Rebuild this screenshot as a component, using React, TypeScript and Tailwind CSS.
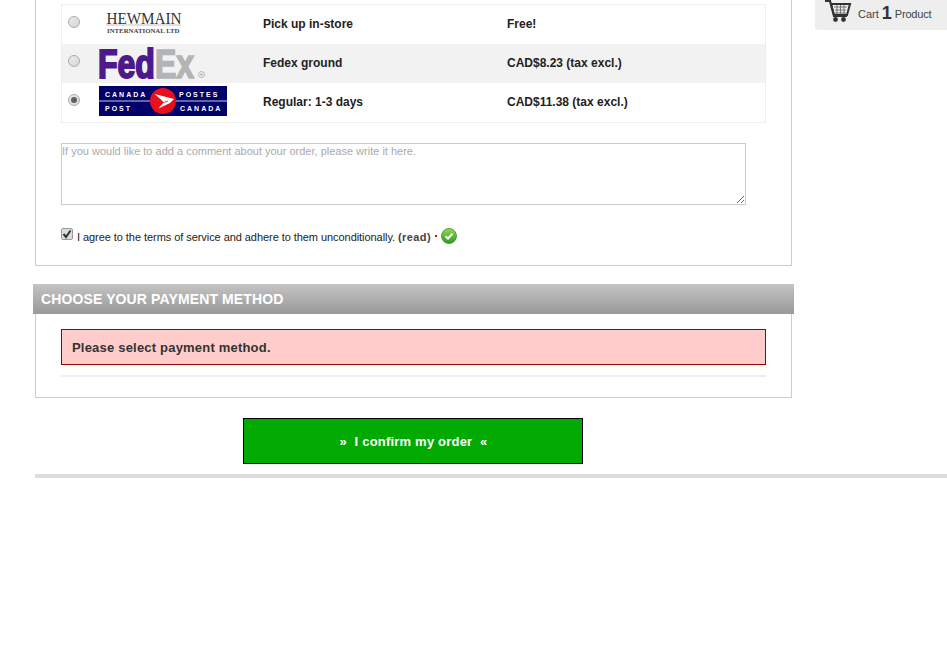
import React from "react";

function Radio({ checked = false }: { checked?: boolean }) {
  return (
    <span className="flex h-[12px] w-[12px] shrink-0 items-center justify-center rounded-full border border-[#acacac] bg-gradient-to-br from-[#ebebeb] to-[#d6d6d6]">
      {checked && <span className="h-[6px] w-[6px] rounded-full bg-[#606060]" />}
    </span>
  );
}

function Hewmain() {
  return (
    <svg width="80" height="24" viewBox="0 0 80 24" className="block overflow-visible">
      <g transform="translate(0.5,10.5) scale(0.95,1)">
        <text x="0" y="0" fontFamily="'Liberation Serif', serif" fontSize="16" fill="#333">HEWMAIN</text>
      </g>
      <rect x="0" y="11.5" width="75" height="1" fill="#c4c4c4" />
      <g transform="translate(1,19.5) scale(1.05,1)">
        <text x="0" y="0" fontFamily="'Liberation Serif', serif" fontSize="6.5" fontWeight="bold" fill="#444">INTERNATIONAL LTD</text>
      </g>
    </svg>
  );
}

function Fedex() {
  const font = "'Liberation Sans', sans-serif";
  return (
    <svg width="108" height="32" viewBox="0 0 108 32" className="block overflow-visible">
      <g transform="translate(-1,29.5) scale(0.8,1)">
        <text x="0" y="0" fontFamily={font} fontSize="40" fontWeight="bold" fill="#4d1a8c" stroke="#4d1a8c" strokeWidth="2">Fed</text>
      </g>
      <g transform="translate(56,29.5) scale(0.8,1)">
        <text x="0" y="0" fontFamily={font} fontSize="40" fontWeight="bold" fill="#b4b4b4" stroke="#b4b4b4" strokeWidth="1.6">Ex</text>
      </g>
      <circle cx="102.5" cy="26.5" r="3" fill="none" stroke="#b4b4b4" strokeWidth="1" />
      <circle cx="102.5" cy="26.5" r="1.2" fill="#b4b4b4" />
    </svg>
  );
}

function CanadaPost() {
  return (
    <svg width="128" height="30" viewBox="0 0 128 30" className="block">
      <rect width="128" height="30" fill="#00006a" />
      <rect y="14.5" width="128" height="1" fill="#c8c8e0" />
      <g fontFamily="'Liberation Sans', sans-serif" fontSize="7" fontWeight="bold" fill="#fff" letterSpacing="2">
        <text x="6" y="11">CANADA</text>
        <text x="80" y="11">POSTES</text>
        <text x="6" y="25">POST</text>
        <text x="81" y="25">CANADA</text>
      </g>
      <circle cx="64" cy="15" r="13" fill="#e8101c" />
      <path d="M55.5 8 L75 13 L71 17 L59.5 22.5 L64.5 16.5 L62 13.5 Z" fill="#fff" />
      <path d="M60 18 L69 15" stroke="#e8101c" strokeWidth="0.8" />
    </svg>
  );
}

function CartIcon() {
  return (
    <svg width="27" height="24" viewBox="0 0 27 24" className="block">
      <path d="M0 1 H5 L9 16 H22" fill="none" stroke="#333" strokeWidth="2.2" />
      <path d="M6 4 H25 L22 15 H9 Z" fill="none" stroke="#333" strokeWidth="2" />
      <path d="M9 7 H22 M10 10 H21 M10 13 H21 M12 5 V14 M15.5 5 V14 M19 5 V14" stroke="#777" strokeWidth="1" />
      <circle cx="10.5" cy="19.5" r="2.4" fill="#333" />
      <circle cx="18.5" cy="19.5" r="2.4" fill="#333" />
    </svg>
  );
}

function CheckBadge() {
  return (
    <svg width="16" height="16" viewBox="0 0 16 16" className="block">
      <defs>
        <linearGradient id="g" x1="0" y1="0" x2="0" y2="1">
          <stop offset="0" stopColor="#8fdc4a" />
          <stop offset="1" stopColor="#2f9a1c" />
        </linearGradient>
      </defs>
      <circle cx="8" cy="8" r="7.5" fill="url(#g)" stroke="#3c8a28" strokeWidth="0.8" />
      <path d="M4.5 8.2 L7 10.5 L11.5 5.8" fill="none" stroke="#fff" strokeWidth="2" />
    </svg>
  );
}

const rows = [
  { logo: <Hewmain />, name: "Pick up in-store", price: "Free!", bg: "bg-white", checked: false, pad: "pl-[7px]" },
  { logo: <Fedex />, name: "Fedex ground", price: "CAD$8.23 (tax excl.)", bg: "bg-[#f2f2f2]", checked: false, pad: "" },
  { logo: <CanadaPost />, name: "Regular: 1-3 days", price: "CAD$11.38 (tax excl.)", bg: "bg-white", checked: true, pad: "mb-[4px]" },
];

export default function App() {
  return (
    <div className="relative flex min-h-[656px] items-start bg-white font-['Liberation_Sans',Arial,sans-serif] text-[12px] text-[#222222]">
      <div className="ml-[33px] w-[761px] shrink-0">
        <section className="mx-[2px] border-x border-b border-[#cccccc] px-[25px] pb-[20px] pt-[4px]">
          <div className="w-[705px] border border-[#eeeeee]">
            {rows.map((r) => (
              <div key={r.name} className={`flex h-[39px] items-center ${r.bg}`}>
                <span className="ml-[6px] -mt-[5px]">
                  <Radio checked={r.checked} />
                </span>
                <div className={`ml-[19px] w-[164px] ${r.pad}`}>{r.logo}</div>
                <div className="mb-[2px] w-[244px] font-bold">{r.name}</div>
                <div className="mb-[2px] font-bold">{r.price}</div>
              </div>
            ))}
          </div>
          <textarea
            readOnly
            placeholder="If you would like to add a comment about your order, please write it here."
            className="mt-[20px] block h-[62px] w-[685px] border border-[#cccccc] pt-[1px] font-['Liberation_Sans',Arial,sans-serif] text-[11px] leading-[13px] placeholder:text-[#aaaaaa]"
          />
          <div className="mt-[22px] flex h-[18px] items-center">
            <span className="-mt-[4px] flex h-[12px] w-[12px] shrink-0 items-center justify-center rounded-[2px] border border-[#999999] bg-[#dcdcdc]">
              <svg width="10" height="10" viewBox="0 0 10 10">
                <path d="M1.5 5 L4 8 L8.5 1.5" fill="none" stroke="#333" strokeWidth="2" />
              </svg>
            </span>
            <span className="ml-[4px] mt-[2px] text-[11px] tracking-[-0.06px]">I agree to the terms of service and adhere to them unconditionally.</span>
            <span className="ml-[3px] mt-[2px] text-[11px] font-bold tracking-[0.4px] text-[#444444]">(read)</span>
            <span className="ml-[4px] -mt-[1px] h-[2px] w-[2px] bg-[#ee0000]" />
            <span className="ml-[4px]">
              <CheckBadge />
            </span>
          </div>
        </section>

        <h2 className="mt-[18px] flex h-[30px] items-center bg-gradient-to-b from-[#c4c4c4] to-[#999999] pl-[8px] text-[14px] font-bold uppercase tracking-[0.12px] text-white">
          Choose your payment method
        </h2>

        <section className="mx-[2px] border-x border-b border-[#cccccc] px-[25px] pb-[20px] pt-[15px]">
          <div className="flex h-[36px] w-[705px] items-center border border-[#990000] bg-[#ffcccc] pl-[10px] pt-[2px] text-[13px] font-bold tracking-[0.2px] text-[#333333]">
            Please select payment method.
          </div>
          <div className="mt-[10px] h-[2px] w-[705px] bg-[#eeeeee]" />
        </section>

        <div className="ml-[210px] mt-[20px] flex h-[46px] w-[340px] items-center justify-center border border-black bg-[#00aa00] pl-[1px] pt-[2px] text-[13px] font-bold tracking-[0.2px] text-white">
          <span className="whitespace-pre">»  I confirm my order  «</span>
        </div>
      </div>

      <aside className="ml-[21px] flex h-[30px] w-[132px] shrink-0 items-center rounded-bl-[3px] bg-[#eeeeee]">
        <span className="ml-[10px] mb-[6px]">
          <CartIcon />
        </span>
        <span className="ml-[6px] mb-[2px] text-[11px] text-[#444444]">Cart</span>
        <span className="ml-[3px] mb-[4px] text-[18px] font-bold leading-none text-[#333333]">1</span>
        <span className="ml-[3px] mb-[2px] text-[11px] tracking-[-0.2px] text-[#444444]">Product</span>
      </aside>

      <div className="absolute left-[35px] right-0 top-[474px] h-[4px] bg-[#dddddf]" />
    </div>
  );
}
